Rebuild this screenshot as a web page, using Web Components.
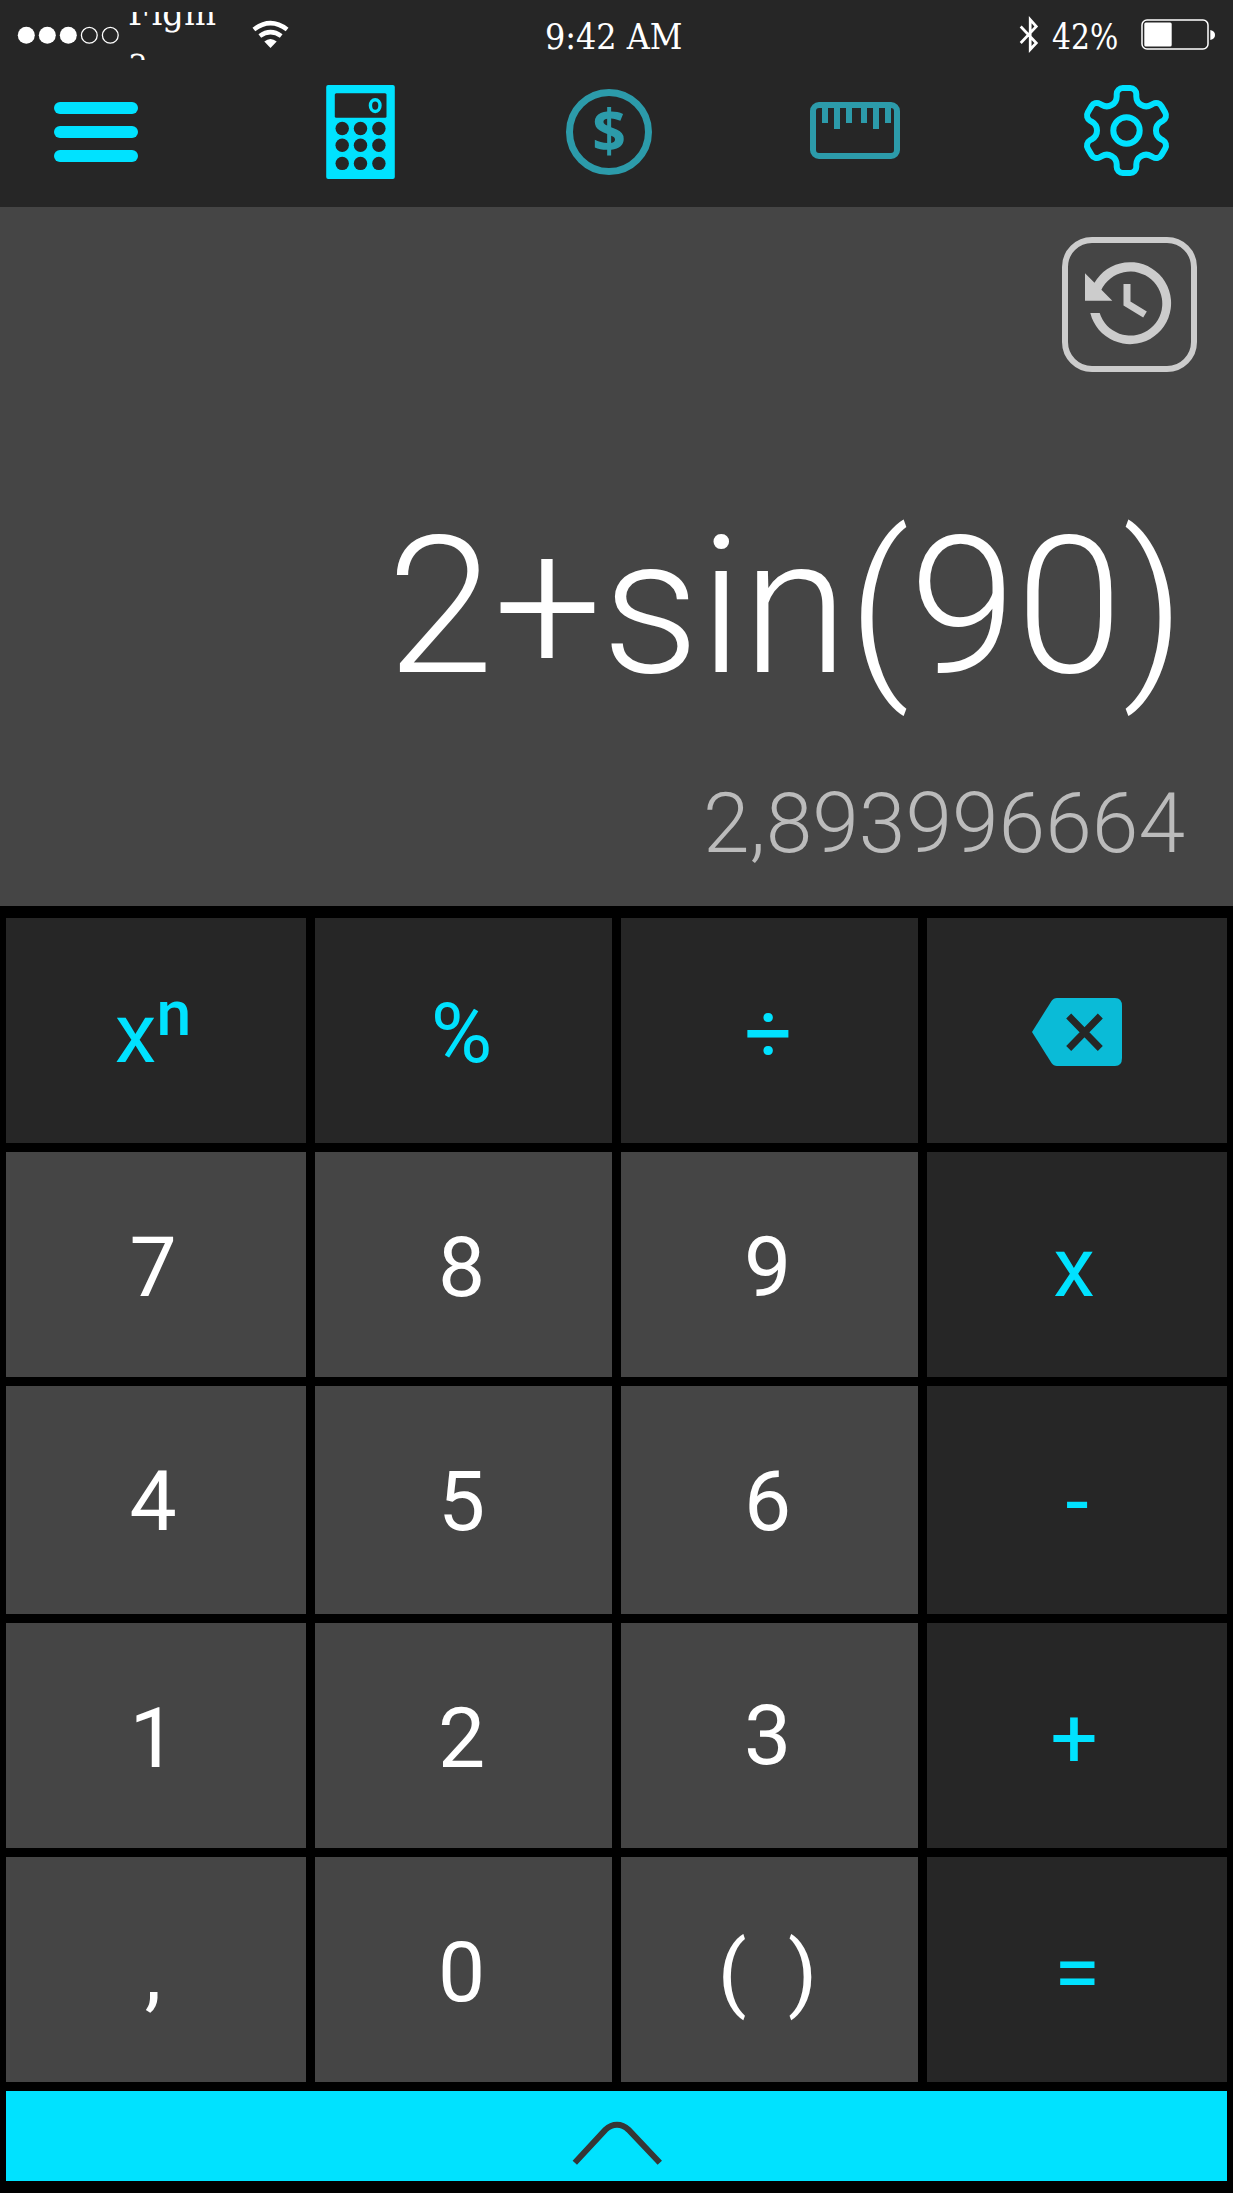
<!DOCTYPE html>
<html lang="en">
<head>
<meta charset="utf-8">
<title>Calculator</title>
<style>
  html, body { margin: 0; background: #000; }
</style>
</head>
<body>
<calc-app></calc-app>

<template id="t-app">
  <style>
    :host { display: flex; flex-direction: column; width: 1233px; height: 2193px; background: #000; font-family: Roboto, sans-serif; overflow: hidden; }
    header { display: flex; flex-direction: column; height: 207px; background: #262626; }
  </style>
  <header>
    <status-bar></status-bar>
    <mode-tabs></mode-tabs>
  </header>
  <calc-display><span slot="expression">2+sin(90)</span><span slot="result">2,893996664</span></calc-display>
  <key-pad></key-pad>
  <drawer-handle></drawer-handle>
</template>

<template id="t-status">
  <style>
    :host { display: flex; height: 60px; color: #fff; font: 36px/47.5px "Roboto Slab", "DejaVu Serif Condensed", "DejaVu Serif", serif; font-stretch: 75%; }
    .side { display: flex; align-items: flex-start; }
    .left { width: 544.5px; }
    .mid { width: 471.5px; }
    .carrier { width: 92px; height: 48px; margin: 12px 27px 0 3.5px; overflow: hidden; display: flex; align-items: center; }
    .carrier p { margin: 0; word-break: break-all; width: 90px; transform: scaleX(1.045); transform-origin: 0 0; }
    svg { display: block; flex: none; }
    .t { display: block; white-space: pre; padding-top: 13px; transform-origin: 0 0; }
    .time { transform: scaleX(.985); }
    .pct { width: 85px; transform: scaleX(.92); margin-left: -1px; margin-right: 1px; }
  </style>
  <div class="side left">
    <svg width="124" height="60" viewBox="0 0 124 60">
      <g fill="#fff"><circle cx="26.3" cy="35.3" r="8.5"/><circle cx="47.3" cy="35.3" r="8.5"/><circle cx="68.3" cy="35.3" r="8.5"/></g>
      <g fill="none" stroke="#fff" stroke-width="1.3"><circle cx="89.3" cy="35.3" r="7.9"/><circle cx="110.3" cy="35.3" r="7.9"/></g>
    </svg>
    <div class="carrier"><p>Figma</p></div>
    <svg width="44" height="60" viewBox="246.500 0 44 60">
      <g fill="none" stroke="#fff" stroke-width="4.6"><path d="M253.4 29.5Q270 16.8 286.600 29.500"/><path d="M259.300 36Q270 28.300 280.700 36"/></g>
      <path fill="#fff" d="M263.800 41.600Q270 36.600 276.200 41.600L270 48Z"/>
    </svg>
  </div>
  <div class="side mid"><span class="t time">9:42 AM</span></div>
  <div class="side">
    <svg width="37" height="60" viewBox="1016 0 37 60"><path fill="none" stroke="#fff" stroke-width="2.700" d="M1020.700 26.500L1036.300 43L1030.200 49.500V19.500L1036.300 26.500L1020.700 43"/></svg>
    <span class="t pct">42%</span>
    <svg width="95" height="60" viewBox="1138 0 95 60">
      <rect x="1142" y="20" width="66" height="29" rx="5" fill="none" stroke="#fff" stroke-width="1.500"/>
      <rect x="1144.300" y="22.500" width="27.400" height="24" rx="1.500" fill="#fff"/>
      <path fill="#fff" d="M1210.300 30C1216.600 31 1216.600 39 1210.300 40Z"/>
    </svg>
  </div>
</template>

<template id="t-tabs">
  <style>
    :host { display: flex; align-items: center; height: 96px; padding: 24px 64px 27px 54px; }
    svg { display: block; flex: none; overflow: visible; }
  </style>
  <svg width="84" height="60" viewBox="0 0 84 60" fill="#00e2ff"><rect width="84" height="12" rx="6"/><rect y="24" width="84" height="12" rx="6"/><rect y="48" width="84" height="12" rx="6"/></svg>
  <svg width="69" height="94" viewBox="325.500 85 69 94" style="margin-left:187.500px">
    <rect x="325.700" y="85" width="68.600" height="94" rx="2" fill="#00e2ff"/>
    <rect x="334.300" y="93.300" width="51.700" height="24.400" rx="1.500" fill="#262626"/>
    <ellipse cx="374.700" cy="105.600" rx="4.800" ry="5.900" fill="none" stroke="#00e2ff" stroke-width="3.400"/>
    <g fill="#262626"><circle cx="341.700" cy="128.500" r="6.700"/><circle cx="360" cy="128.500" r="6.700"/><circle cx="378.400" cy="128.500" r="6.700"/><circle cx="341.700" cy="145.300" r="6.700"/><circle cx="360" cy="145.300" r="6.700"/><circle cx="378.400" cy="145.300" r="6.700"/><circle cx="341.700" cy="163.400" r="6.700"/><circle cx="360" cy="163.400" r="6.700"/><circle cx="378.400" cy="163.400" r="6.700"/></g>
  </svg>
  <svg width="86" height="86" viewBox="0 0 86 86" style="margin-left:171.500px"><circle cx="43" cy="43" r="39.500" fill="none" stroke="#2c9baa" stroke-width="7"/><text x="43" y="62.500" text-anchor="middle" font-family="Open Sans, sans-serif" font-weight="700" font-size="59" fill="#2c9baa">$</text></svg>
  <svg width="90" height="60" viewBox="810 102 90 60" style="margin-left:158px">
    <rect x="813" y="105" width="84" height="51" rx="6" fill="none" stroke="#2c9baa" stroke-width="6"/>
    <path fill="#2c9baa" d="M822 107h6v16h-6zM834 107h6v22h-6zM846 107h6v16h-6zM861 107h6v16h-6zM873 107h6v22h-6zM885 107h6v16h-6z"/>
  </svg>
  <svg width="85" height="92" viewBox="-42.500 -44.500 85 92" fill="none" stroke="#00e2ff" stroke-width="6" style="margin-left:184px"><path id="gear"/><circle r="13.200"/></svg>
</template>

<template id="t-display">
  <style>
    :host { display: flex; flex-direction: column; align-items: flex-end; height: 699px; background: #454545; color: #fff; font-weight: 300; }
    .history { display: block; margin: 30px 36px 0 0; }
    .expression { margin: 122px 48px 0 0; font-size: 192px; line-height: 225px; white-space: nowrap; }
    .result { margin: 56px 48px 0 0; font-size: 84px; line-height: 98px; color: #bbb; white-space: nowrap; }
  </style>
  <svg class="history" width="135" height="135" viewBox="1062 237 135 135">
    <rect x="1065" y="240" width="129" height="129" rx="27" fill="none" stroke="#ccc" stroke-width="6"/>
    <path fill="#ccc" d="M1090.300 313A41 41 0 1 0 1094.500 282.800L1085 273.300V300.700H1112.300L1101.400 289.800A32 32 0 1 1 1099.700 313Z"/>
    <path d="M1127 284V303.500L1145 314.500" fill="none" stroke="#ccc" stroke-width="7"/>
  </svg>
  <div class="expression"><slot name="expression"></slot></div>
  <div class="result"><slot name="result"></slot></div>
</template>

<template id="t-pad">
  <style>
    :host { display: grid; grid-template-columns: 300px 297px 297px 300px; grid-template-rows: 225px 225px 228px 225px 225px; gap: 9px; padding: 12px 6px 9px; }
    .sup { font-size: 62.500px; font-weight: 500; line-height: 0; vertical-align: 27.500px; }
    svg { display: block; }
  </style>
  <calc-key op dx="-3" dy="3">x<span class="sup">n</span></calc-key>
  <calc-key op dx="-2" dy="3">%</calc-key>
  <calc-key op dx="-1" dy="3">÷</calc-key>
  <calc-key op dy="1"><svg width="90" height="68" viewBox="1032 998 90 68"><path fill="#0abbd7" d="M1032 1032L1051.500 1001Q1053.500 998 1057 998H1115Q1122 998 1122 1006V1058Q1122 1066 1115 1066H1057Q1053.500 1066 1051.500 1063Z"/><path d="M1068.700 1016L1100.300 1048.500M1100.300 1016L1068.700 1048.500" stroke="#262626" stroke-width="7"/></svg></calc-key>
  <calc-key dx="-3" dy="3">7</calc-key>
  <calc-key dx="-2" dy="3">8</calc-key>
  <calc-key dx="-2" dy="3">9</calc-key>
  <calc-key op dx="-3" dy="3">x</calc-key>
  <calc-key dx="-3" dy="2">4</calc-key>
  <calc-key dx="-2" dy="2">5</calc-key>
  <calc-key dx="-2" dy="2">6</calc-key>
  <calc-key op dy="2">-</calc-key>
  <calc-key dx="-3" dy="3">1</calc-key>
  <calc-key dx="-2" dy="3">2</calc-key>
  <calc-key dx="-2">3</calc-key>
  <calc-key op dx="-3" dy="3">+</calc-key>
  <calc-key dx="-3" dy="3">,</calc-key>
  <calc-key dx="-2" dy="3">0</calc-key>
  <calc-key dx="-2" dy="3">(  )</calc-key>
  <calc-key op dy="3">=</calc-key>
</template>

<template id="t-key">
  <style>
    :host { display: flex; align-items: center; justify-content: center; background: #454545; color: #fff; font-size: 84px; line-height: 98px; white-space: pre; }
    :host([op]) { background: #262626; color: #00e2ff; }
    div { transform: translate(var(--dx, 0px), var(--dy, 0px)); }
  </style>
  <div><slot></slot></div>
</template>

<template id="t-drawer">
  <style>
    :host { display: flex; justify-content: center; height: 90px; margin: 0 6px; background: #00e2ff; }
  </style>
  <svg width="1221" height="90" viewBox="6 2091 1221 90"><path d="M574.800 2162.700L605.500 2129.700Q610.700 2124.700 617 2124.700Q623.200 2124.700 628.500 2129.700L659.800 2162.700" fill="none" stroke="#363636" stroke-width="6"/></svg>
</template>

<script>
  class Templated extends HTMLElement {
    constructor() {
      super();
      const tpl = document.getElementById(this.constructor.template);
      this.attachShadow({ mode: 'open' }).append(document.importNode(tpl.content, true));
    }
  }
  const define = (name, template, base = Templated) =>
    customElements.define(name, class extends base { static template = template; });

  /* Six-toothed outline: one tooth and one valley, rotated in 60° steps. */
  class ModeTabs extends Templated {
    connectedCallback() {
      const rot = (x, y, k) => {
        const a = k * Math.PI / 3, c = Math.cos(a), s = Math.sin(a);
        return (x * c - y * s).toFixed(2) + ' ' + (x * s + y * c).toFixed(2);
      };
      let d = 'M' + rot(-9.8, -34.1, 0);
      for (let k = 0; k < 6; k++) {
        d += `L${rot(-9.8, -36.5, k)}A6 6 0 0 1 ${rot(-3.8, -42.5, k)}L${rot(3.8, -42.5, k)}`
           + `A6 6 0 0 1 ${rot(9.8, -36.5, k)}L${rot(9.8, -34.1, k)}A9.9 9.9 0 0 0 ${rot(-9.8, -34.1, k + 1)}`;
      }
      this.shadowRoot.getElementById('gear').setAttribute('d', d + 'Z');
    }
  }
  class CalcKey extends Templated {
    connectedCallback() {
      for (const a of ['dx', 'dy'])
        if (this.hasAttribute(a)) this.style.setProperty('--' + a, this.getAttribute(a) + 'px');
    }
  }
  define('status-bar', 't-status');
  define('mode-tabs', 't-tabs', ModeTabs);
  define('calc-display', 't-display');
  define('calc-key', 't-key', CalcKey);
  define('key-pad', 't-pad');
  define('drawer-handle', 't-drawer');
  define('calc-app', 't-app');
</script>
</body>
</html>
